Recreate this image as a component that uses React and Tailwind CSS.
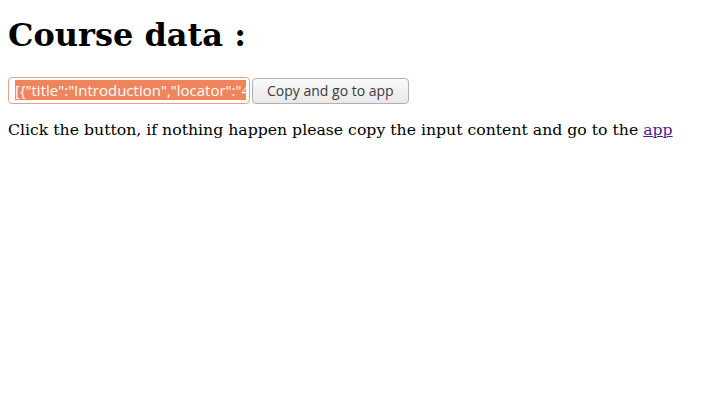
import React from "react";

function App() {
  return (
    <div className="min-h-screen bg-white px-2 text-black" style={{ fontFamily: '"DejaVu Serif", serif' }}>
      <h1 className="pt-[16px] text-[32px] font-bold leading-[38px]">Course data :</h1>
      <div className="mt-[23px] flex items-center gap-[2px]">
        {/* fake input with its content selected */}
        <div className="flex h-[27px] w-[242px] items-center rounded-[4px] border border-[#e8a088] bg-white pl-[6px] pr-[3px] font-['Open_Sans',sans-serif] text-[15px] whitespace-nowrap">
          <div className="overflow-hidden">
            <span className="bg-[#f0845c] leading-[20px] text-white">[{'{'}"title":"Introduction","locator":"4</span>
          </div>
        </div>
        <button className="h-[26px] rounded-[4px] border border-[#b0b0b0] bg-gradient-to-b from-[#fafafa] to-[#e8e8e8] px-[14px] font-['Open_Sans',sans-serif] text-[14px] text-[#3c3c3c]">
          Copy and go to app
        </button>
      </div>
      <p className="mt-[14px] text-[15.7px]">
        Click the button, if nothing happen please copy the input content and go to the{" "}
        <a href="#" className="text-[#551a8b] underline">app</a>
      </p>
    </div>
  );
}

export default App;
